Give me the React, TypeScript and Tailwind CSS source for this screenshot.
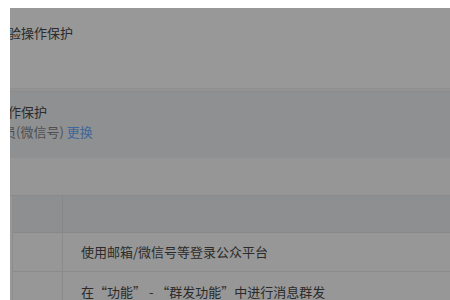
export default function App() {
  const font = { fontFamily: '"Noto Sans CJK SC", "Noto Sans", sans-serif' };
  return (
    <div className="w-[450px] h-[300px] bg-white overflow-hidden pt-[8px] pl-[10px]" style={font}>
      <div className="h-[292px] bg-[#989898] overflow-hidden text-[13px] text-[#2b2b2b]">
        {/* ── Section: 操作保护 ── */}
        <div className="h-[81px] pt-[15px] border-b border-[#909090]">
          <p className="-ml-[2px] leading-5">验操作保护</p>
        </div>
        <div className="h-[3px] bg-[#939393] border-b border-[#8d8d8d]" />

        {/* ── Section: 当前保护 ── */}
        <div className="h-[66px] bg-[#8f9092] pt-[10px]">
          <p className="-ml-[2px] leading-5">作保护</p>
          <p className="-ml-[7px] leading-5 text-[#4f4f4f]">
            员(微信号) <span className="text-[#3e679b]">更换</span>
          </p>
        </div>

        <div className="h-[38px] bg-[#969696] border-b border-[#8a8a8a]" />

        {/* ── Table ── */}
        <div className="ml-[2px] border-l border-[#8c8c8c]">
          <div className="flex h-[37px] bg-[#8e8f91] border-b border-[#888888]">
            <div className="w-[50px] border-r border-[#878787]" />
            <div className="flex-1" />
          </div>
          <div className="flex h-[39px] bg-[#979797] border-b border-[#8b8b8b]">
            <div className="w-[50px] border-r border-[#8b8b8b]" />
            <div className="flex-1 pl-[18px] flex items-center">使用邮箱/微信号等登录公众平台</div>
          </div>
          <div className="flex h-[39px] bg-[#979797]">
            <div className="w-[50px] border-r border-[#8b8b8b]" />
            <div className="flex-1 pl-[18px] flex items-center">在“功能” - “群发功能”中进行消息群发</div>
          </div>
        </div>
      </div>
    </div>
  );
}
